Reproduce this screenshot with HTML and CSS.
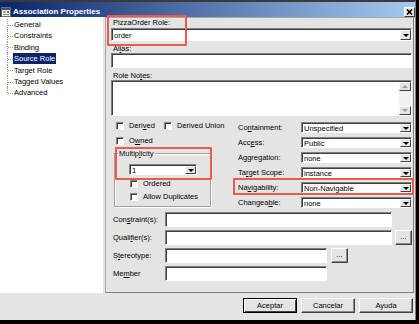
FILE: index.html
```html
<!DOCTYPE html>
<html lang="en">
<head>
  <meta charset="UTF-8" />
  <title>Association Properties</title>
  <link rel="stylesheet" href="styles.css">
</head>
<body>

<div class="window">
  <!-- Title bar -->
  <div class="titlebar">
    <svg class="app-icon" width="10" height="10" viewBox="0 0 10 10">
      <rect x="0.5" y="0.5" width="9" height="9" fill="#f2f2f2" stroke="#6b6b6b"/>
      <rect x="1" y="1" width="8" height="2" fill="#2a4fa0"/>
      <rect x="2" y="4" width="3" height="2" fill="#d9a441"/>
      <rect x="6" y="4" width="2" height="2" fill="#3f8f3f"/>
      <rect x="2" y="7" width="6" height="1" fill="#8a8a8a"/>
    </svg>
    <span class="title">Association Properties</span>
    <span class="close-btn">
      <svg width="7" height="6" viewBox="0 0 7 6"><path d="M1 0.5 L6 5.5 M6 0.5 L1 5.5" stroke="#000" stroke-width="1.6"/></svg>
    </span>
  </div>

  <div class="main">
    <!-- Page tree -->
    <ul class="tree">
      <li>General</li>
      <li>Constraints</li>
      <li>Binding</li>
      <li class="selected"><span>Source Role</span></li>
      <li>Target Role</li>
      <li>Tagged Values</li>
      <li>Advanced</li>
    </ul>

    <!-- Source Role page -->
    <div class="panel">
      <div class="lbl lbl-first">PizzaOrder Role:</div>
      <div class="combo combo-tall">
        <span class="combo-value">order</span>
        <span class="drop-btn"></span>
      </div>

      <div class="lbl">Al<u>i</u>as:</div>
      <div class="field field-wide"></div>

      <div class="lbl">Role No<u>t</u>es:</div>
      <div class="notes">
        <div class="notes-text"></div>
        <div class="vscroll">
          <span class="sb-btn sb-up"></span>
          <span class="sb-track"></span>
          <span class="sb-btn sb-down"></span>
        </div>
      </div>

      <div class="options">
        <div class="opts-left">
          <div class="check-row">
            <span class="check check-derived"><span class="box"></span>Deri<u>v</u>ed</span>
            <span class="check"><span class="box"></span>Derived Union</span>
          </div>
          <div class="check-row check-row-owned">
            <span class="check"><span class="box"></span>O<u>w</u>ned</span>
          </div>

          <fieldset class="group">
            <legend>Multip<u>l</u>icity</legend>
            <div class="combo combo-mult">
              <span class="combo-value">1</span>
              <span class="drop-btn"></span>
            </div>
            <div class="check-row check-row-group">
              <span class="check"><span class="box"></span>Ordered</span>
            </div>
            <div class="check-row check-row-group">
              <span class="check"><span class="box"></span>Allow Duplicates</span>
            </div>
          </fieldset>
        </div>

        <div class="opts-right">
          <div class="opt-row">
            <span class="opt-label">Co<u>n</u>tainment:</span>
            <div class="combo combo-opt"><span class="combo-value">Unspecified</span><span class="drop-btn"></span></div>
          </div>
          <div class="opt-row">
            <span class="opt-label">Acc<u>e</u>ss:</span>
            <div class="combo combo-opt"><span class="combo-value">Public</span><span class="drop-btn"></span></div>
          </div>
          <div class="opt-row">
            <span class="opt-label">A<u>g</u>gregation:</span>
            <div class="combo combo-opt"><span class="combo-value">none</span><span class="drop-btn"></span></div>
          </div>
          <div class="opt-row">
            <span class="opt-label">Ta<u>r</u>get Scope:</span>
            <div class="combo combo-opt"><span class="combo-value">instance</span><span class="drop-btn"></span></div>
          </div>
          <div class="opt-row">
            <span class="opt-label">Na<u>v</u>igability:</span>
            <div class="combo combo-opt"><span class="combo-value">Non-Navigable</span><span class="drop-btn"></span></div>
          </div>
          <div class="opt-row">
            <span class="opt-label">Changea<u>b</u>le:</span>
            <div class="combo combo-opt"><span class="combo-value">none</span><span class="drop-btn"></span></div>
          </div>
        </div>
      </div>

      <div class="frow">
        <span class="frow-label">Con<u>s</u>traint(s):</span>
        <div class="field field-long"></div>
      </div>
      <div class="frow">
        <span class="frow-label">Quali<u>f</u>ier(s):</span>
        <div class="field field-long"></div>
        <span class="btn btn-dots">...</span>
      </div>
      <div class="frow">
        <span class="frow-label">S<u>t</u>ereotype:</span>
        <div class="field field-short"></div>
        <span class="btn btn-dots btn-dots-short">...</span>
      </div>
      <div class="frow">
        <span class="frow-label">Me<u>m</u>ber</span>
        <div class="field field-short"></div>
      </div>
    </div>
  </div>

  <!-- Dialog buttons -->
  <div class="footer">
    <span class="btn btn-default">Aceptar</span>
    <span class="btn">Cancelar</span>
    <span class="btn">Ayuda</span>
  </div>
</div>

<!-- red callouts drawn over the dialog -->
<div class="callout callout-role"></div>
<div class="callout callout-mult"></div>
<div class="callout callout-nav"></div>

</body>
</html>
```

FILE: styles.css
```css
* {
  margin: 0;
  padding: 0;
  box-sizing: border-box;
}

html, body {
  width: 419px;
  height: 324px;
  overflow: hidden;
}

body {
  background-color: #000;
  font-family: "Liberation Sans", Arial, sans-serif;
  font-size: 7.5px;
  color: #000;
}

u {
  text-underline-offset: 1px;
}

.window {
  width: 416px;
  height: 320px;
  background-color: #e4e4e4;
  border-top: 2px solid #3a3a3a;
  border-right: 1px solid #808080;
  display: flex;
  flex-direction: column;
}

/* title bar */
.titlebar {
  height: 15px;
  display: flex;
  align-items: center;
  background: linear-gradient(to right, #0a246a, #a6caf0);
  color: #fff;
  padding-left: 1px;
}

.app-icon {
  margin-top: 4px;
  flex-shrink: 0;
}

.title {
  font-weight: bold;
  font-size: 8px;
  margin-left: 2px;
  padding-top: 4px;
}

.close-btn {
  margin-left: auto;
  margin-top: 4px;
  width: 11px;
  height: 10px;
  background-color: #e4e4e4;
  border: 1px solid;
  border-color: #fff #404040 #404040 #fff;
  display: flex;
  align-items: center;
  justify-content: center;
}

.main {
  height: 276px;
  display: flex;
}

/* tree */
.tree {
  width: 103px;
  background-color: #fff;
  list-style: none;
  padding-top: 2px;
  margin-right: 2px;
}

.tree li {
  position: relative;
  height: 11.4px;
  line-height: 11.4px;
  padding-left: 14px;
  white-space: nowrap;
}

.tree li::before {
  content: '';
  position: absolute;
  left: 7px;
  top: 0;
  bottom: 0;
  border-left: 1px dotted #9a9a9a;
}

.tree li:last-child::before {
  bottom: 50%;
}

.tree li::after {
  content: '';
  position: absolute;
  left: 8px;
  width: 5px;
  top: 50%;
  border-top: 1px dotted #9a9a9a;
}

.tree .selected span {
  background-color: #0a246a;
  color: #fff;
  margin-left: -1px;
  padding: 1px 1px;
}

/* property page */
.panel {
  width: 309px;
  border: 1px solid;
  border-color: #a8a8a8 #808080 #808080 #a8a8a8;
  padding: 0 1px 0 5px;
}

.lbl {
  height: 9px;
  line-height: 9px;
  padding-left: 2px;
  margin-top: 3px;
}

.lbl-first {
  margin-top: 0;
  margin-bottom: 1px;
}

.combo,
.field,
.notes {
  background-color: #fff;
  border: 1px solid;
  border-color: #808080 #fff #fff #808080;
  box-shadow: inset 1px 1px 0 #404040;
}

.combo {
  display: flex;
  height: 11px;
}

.combo-tall {
  height: 13px;
}

.combo-value {
  flex: 1;
  padding-left: 2px;
  padding-top: 1px;
  display: flex;
  align-items: center;
  white-space: nowrap;
}

.drop-btn {
  width: 11px;
  margin-top: 1px;
  background-color: #e4e4e4;
  border: 1px solid;
  border-color: #f6f6f6 #404040 #404040 #f6f6f6;
  display: flex;
  align-items: center;
  justify-content: center;
}

.drop-btn::after {
  content: '';
  border-left: 3px solid transparent;
  border-right: 3px solid transparent;
  border-top: 3px solid #000;
}

.field-wide {
  height: 14px;
}

.notes {
  height: 36px;
  display: flex;
}

.notes-text {
  flex: 1;
}

.vscroll {
  width: 12px;
  margin-top: 1px;
  display: flex;
  flex-direction: column;
  background-color: #f1f1f1;
}

.sb-btn {
  height: 9px;
  background-color: #e4e4e4;
  border: 1px solid;
  border-color: #f6f6f6 #404040 #404040 #f6f6f6;
  display: flex;
  align-items: center;
  justify-content: center;
}

.sb-track {
  flex: 1;
}

.sb-up::after,
.sb-down::after {
  content: '';
  border-left: 3px solid transparent;
  border-right: 3px solid transparent;
}

.sb-up::after {
  border-bottom: 3px solid #a0a0a0;
}

.sb-down::after {
  border-top: 3px solid #a0a0a0;
}

/* checkboxes, multiplicity and combos */
.options {
  height: 93px;
  display: flex;
}

.opts-left {
  width: 104px;
  flex-shrink: 0;
  padding-top: 5px;
}

.check-row {
  height: 9px;
  display: flex;
  align-items: center;
  padding-left: 5px;
}

.check-row-owned {
  margin-top: 6px;
}

.check {
  flex-shrink: 0;
  display: flex;
  align-items: center;
  white-space: nowrap;
}

.check-derived {
  width: 48px;
}

.box {
  width: 8px;
  height: 8px;
  margin-right: 5px;
  background-color: #fff;
  border: 1px solid;
  border-color: #808080 #fff #fff #808080;
  box-shadow: inset 1px 1px 0 #404040;
}

.group {
  margin: 4px 0 0 3px;
  width: 97px;
  height: 58px;
  border: 1px solid #a0a0a0;
  box-shadow: inset 1px 1px 0 #fff, 1px 1px 0 #fff;
  padding: 0;
}

.group legend {
  margin-left: 3px;
  padding: 0 1px;
  line-height: 9px;
}

.combo-mult {
  width: 68px;
  margin: 6px 0 0 14px;
}

.check-row-group {
  margin-top: 4px;
  padding-left: 15px;
}

.opts-right {
  margin-left: 23px;
  padding-top: 6px;
}

.opt-row {
  height: 11px;
  display: flex;
  align-items: center;
  margin-bottom: 4px;
}

.opt-label {
  width: 63px;
  white-space: nowrap;
}

.combo-opt {
  width: 111px;
}

/* constraint / qualifier rows */
.frow {
  height: 15px;
  margin-top: 3px;
  display: flex;
  align-items: center;
}

.frow-label {
  width: 54px;
  padding-left: 2px;
  white-space: nowrap;
}

.field {
  height: 15px;
}

.field-long {
  width: 227px;
}

.field-short {
  width: 162px;
}

.btn {
  height: 15px;
  background-color: #e4e4e4;
  border: 1px solid;
  border-color: #fff #404040 #404040 #fff;
  box-shadow: inset -1px -1px 0 #8a8a8a;
  display: flex;
  align-items: center;
  justify-content: center;
}

.btn-dots {
  width: 17px;
  margin-left: 3px;
  padding-bottom: 2px;
}

.btn-dots-short {
  margin-left: 4px;
}

/* footer */
.footer {
  flex: 1;
  display: flex;
  justify-content: flex-end;
  padding: 5px 2px 0 0;
  gap: 4px;
}

.footer .btn {
  width: 54px;
}

.footer .btn-default {
  border-color: #000;
  box-shadow: inset 1px 1px 0 #fff, inset -1px -1px 0 #404040;
}

/* red callouts */
.callout {
  position: absolute;
  border: 2px solid #ec5a4e;
  border-radius: 1px;
}

.callout-role {
  left: 107px;
  top: 15px;
  width: 80px;
  height: 31px;
}

.callout-mult {
  left: 115px;
  top: 147px;
  width: 97px;
  height: 33px;
}

.callout-nav {
  left: 233px;
  top: 178px;
  width: 181px;
  height: 17px;
}
```
